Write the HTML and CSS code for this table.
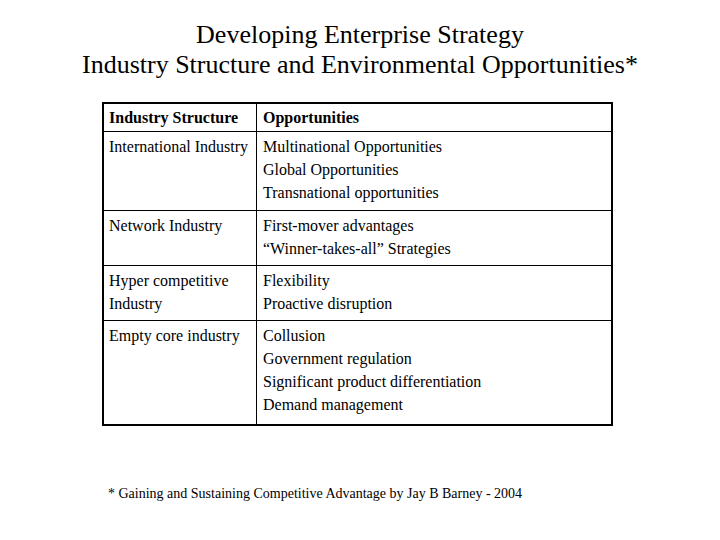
FILE: index.html
```html
<!DOCTYPE html>
<html>
<head>
<meta charset="utf-8">
<link rel="stylesheet" href="styles.css">
</head>
<body>
<div class="slide">
  <h1 class="title">Developing Enterprise Strategy<br>Industry Structure and Environmental Opportunities*</h1>
  <div class="table">
    <div class="cell head left">Industry Structure</div>
    <div class="cell head right">Opportunities</div>
    <div class="cell left r1">International Industry</div>
    <div class="cell right r1">Multinational Opportunities<br>Global Opportunities<br>Transnational opportunities</div>
    <div class="cell left r2">Network Industry</div>
    <div class="cell right r2">First-mover advantages<br>“Winner-takes-all” Strategies</div>
    <div class="cell left r3">Hyper competitive<br>Industry</div>
    <div class="cell right r3">Flexibility<br>Proactive disruption</div>
    <div class="cell left r4 last">Empty core industry</div>
    <div class="cell right r4 last">Collusion<br>Government regulation<br>Significant product differentiation<br>Demand management</div>
  </div>
  <p class="note">* Gaining and Sustaining Competitive Advantage by Jay B Barney - 2004</p>
</div>
</body>
</html>
```
FILE: styles.css
```css
html, body { margin: 0; padding: 0; background: #fff; }
.slide {
  width: 720px; height: 540px;
  font-family: "Liberation Serif", "Times New Roman", serif;
  color: #000;
  display: flex; flex-direction: column; align-items: flex-start;
}
.title {
  align-self: center;
  margin: 20px 0 0 0;
  font-weight: normal;
  font-size: 26px;
  line-height: 30px;
  text-align: center;
}
.table {
  margin: 22px 0 0 102px;
  width: 511px;
  display: grid;
  grid-template-columns: 153px 1fr;
  grid-template-rows: 28px 79px 55px 55px 103px;
  border: 2px solid #000;
  box-sizing: border-box;
}
.cell {
  font-size: 16px;
  line-height: 23px;
  border-bottom: 1px solid #000;
  padding: 3px 0 0 6px;
  box-sizing: border-box;
}
.cell.left { border-right: 1px solid #000; padding-left: 5px; }
.cell.right { padding-left: 6px; }
.cell.head { font-weight: bold; padding-top: 2px; }
.cell.last { border-bottom: none; }
.note {
  margin: 60px 0 0 108px;
  font-size: 14px;
}
```
